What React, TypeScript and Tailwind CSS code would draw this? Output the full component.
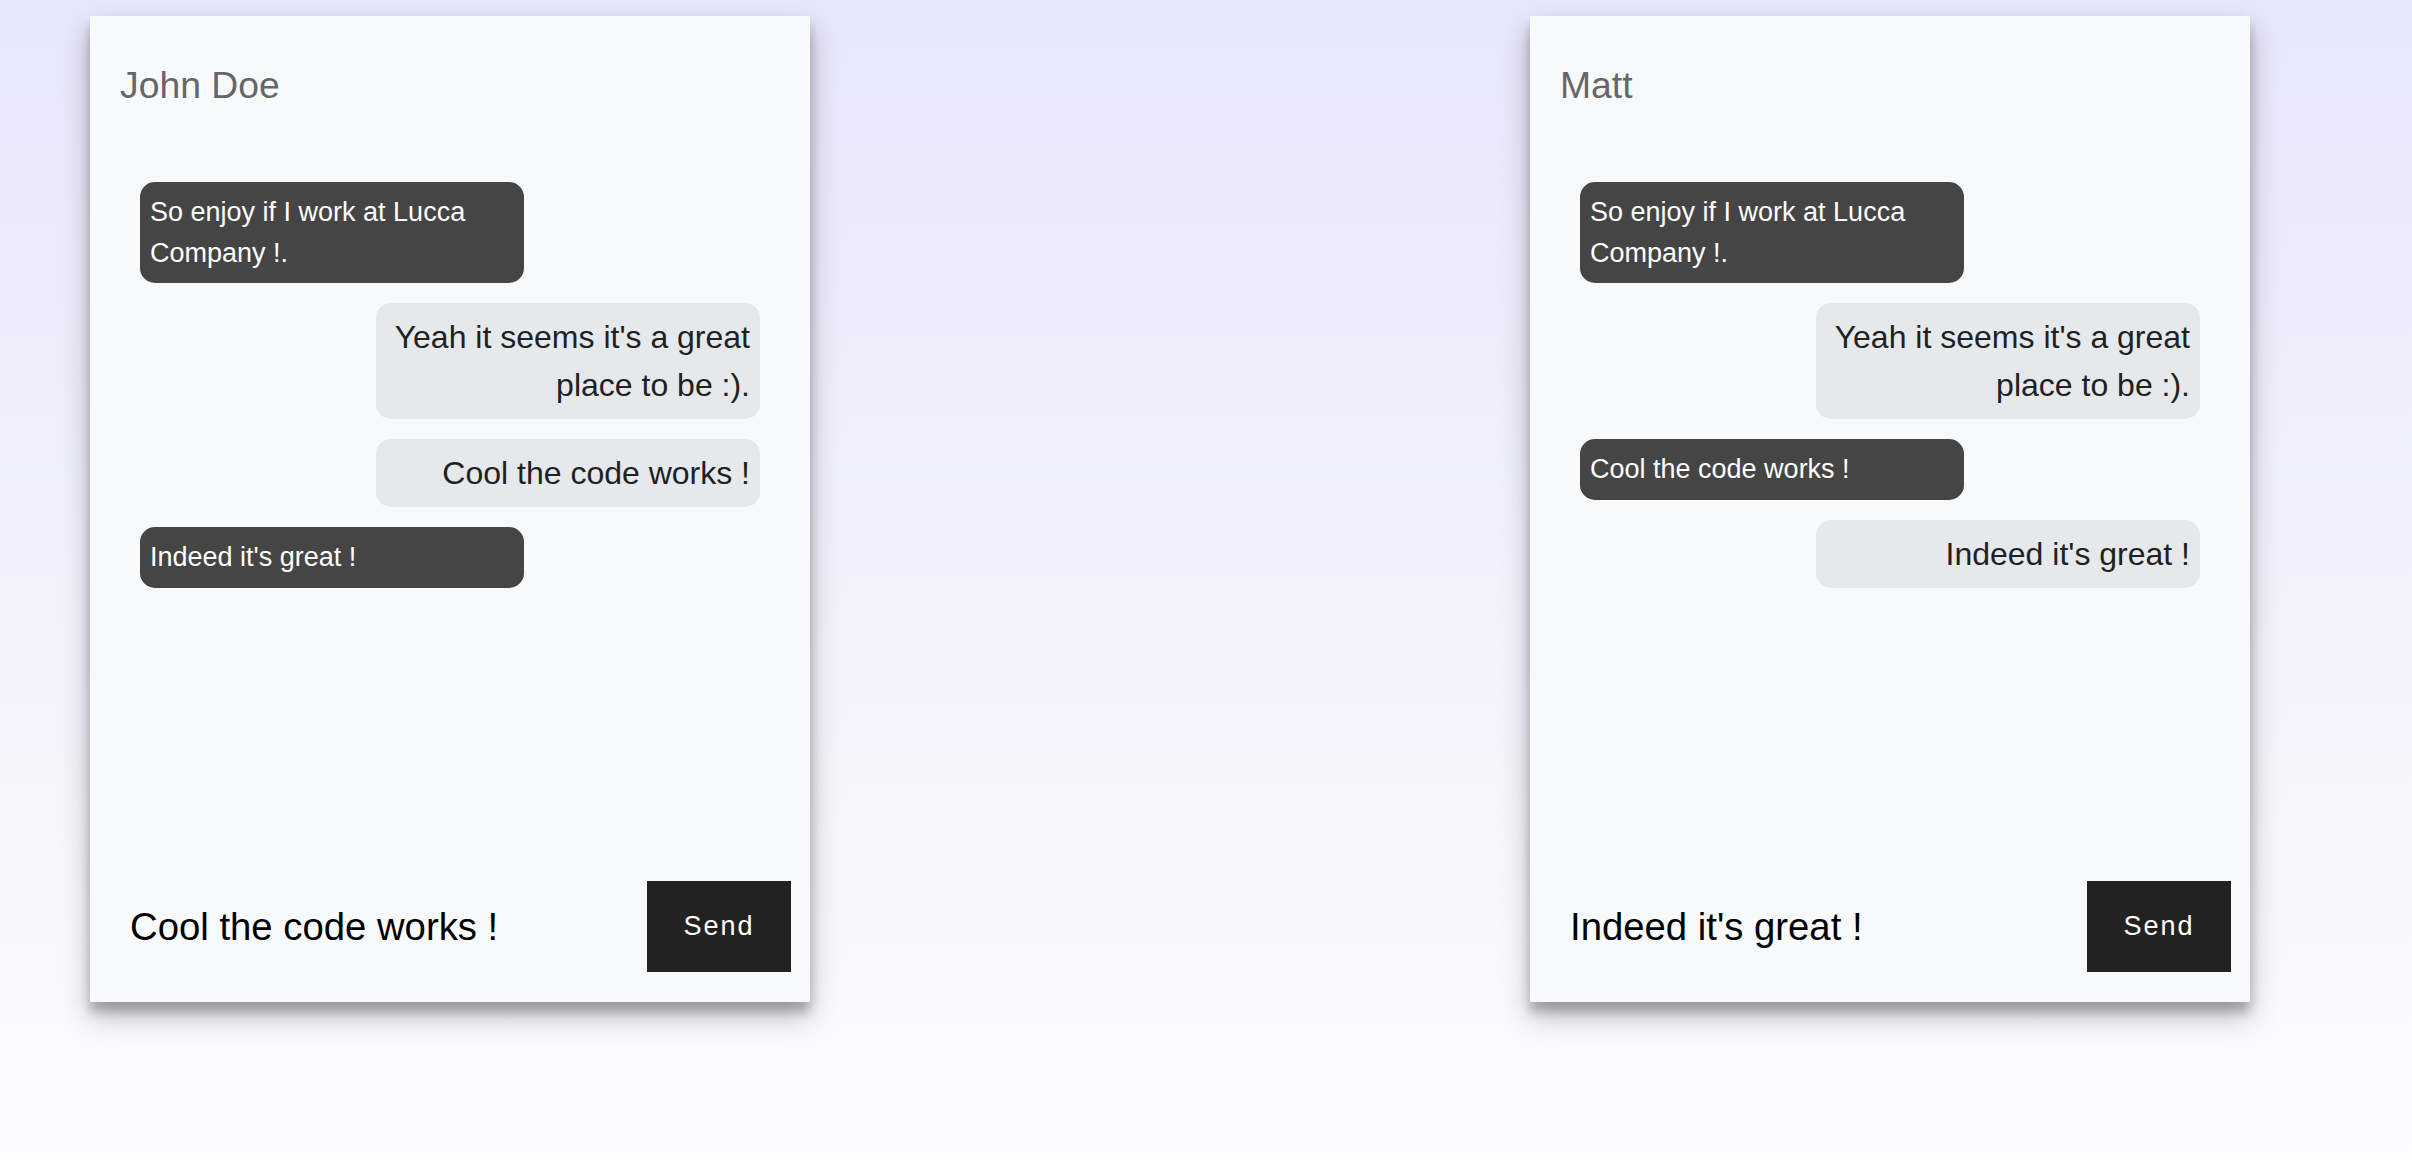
import React from "react";

type Msg = { text: string; mine: boolean };
type Chat = { name: string; input: string; messages: Msg[] };

const chats: Chat[] = [
  {
    name: "John Doe",
    input: "Cool the code works !",
    messages: [
      { text: "So enjoy if I work at Lucca Company !.", mine: false },
      { text: "Yeah it seems it's a great place to be :).", mine: true },
      { text: "Cool the code works !", mine: true },
      { text: "Indeed it's great !", mine: false },
    ],
  },
  {
    name: "Matt",
    input: "Indeed it's great !",
    messages: [
      { text: "So enjoy if I work at Lucca Company !.", mine: false },
      { text: "Yeah it seems it's a great place to be :).", mine: true },
      { text: "Cool the code works !", mine: false },
      { text: "Indeed it's great !", mine: true },
    ],
  },
];

function Bubble({ msg }: { msg: Msg }) {
  if (msg.mine) {
    return (
      <div className="self-end w-[384px] rounded-[15px] bg-[#e6e9ec] text-[#212121] text-[32px] leading-[48px] p-[10px] text-right">
        {msg.text}
      </div>
    );
  }
  return (
    <div className="self-start w-[384px] rounded-[15px] bg-[#454545] text-white text-[27px] leading-[40.5px] p-[10px] text-left">
      {msg.text}
    </div>
  );
}

function ChatCard({ chat }: { chat: Chat }) {
  return (
    <div className="w-[720px] h-[986px] shrink-0 bg-[#f8f9fa] flex flex-col shadow-[0_14px_28px_rgba(0,0,0,0.25),0_10px_10px_rgba(0,0,0,0.22)]">
      <div className="pt-[47px] pl-[30px] text-[37.3px] leading-[44px] text-[#666666]">
        {chat.name}
      </div>
      <div className="flex-1 flex flex-col gap-[20px] px-[50px] pt-[75px]">
        {chat.messages.map((m, i) => (
          <Bubble key={i} msg={m} />
        ))}
      </div>
      <div className="flex items-center pl-[40px] pr-[19px] pb-[30px]">
        <input
          className="flex-1 min-w-0 bg-transparent outline-none border-none text-[38.3px] text-black p-0"
          style={{ fontFamily: '"Liberation Sans", Arial, sans-serif' }}
          defaultValue={chat.input}
        />
        <button className="w-[144px] h-[91px] bg-[#222222] text-white text-[27px] tracking-[2px] flex items-center justify-center">
          Send
        </button>
      </div>
    </div>
  );
}

export default function App() {
  return (
    <div
      className="w-full h-[1160px] bg-linear-to-b from-[#e8e6fa] to-[#fcfcff] flex items-start pt-[16px] pl-[90px] gap-[720px]"
      style={{ fontFamily: '"Liberation Sans", Arial, sans-serif' }}
    >
      {chats.map((c) => (
        <ChatCard key={c.name} chat={c} />
      ))}
    </div>
  );
}
